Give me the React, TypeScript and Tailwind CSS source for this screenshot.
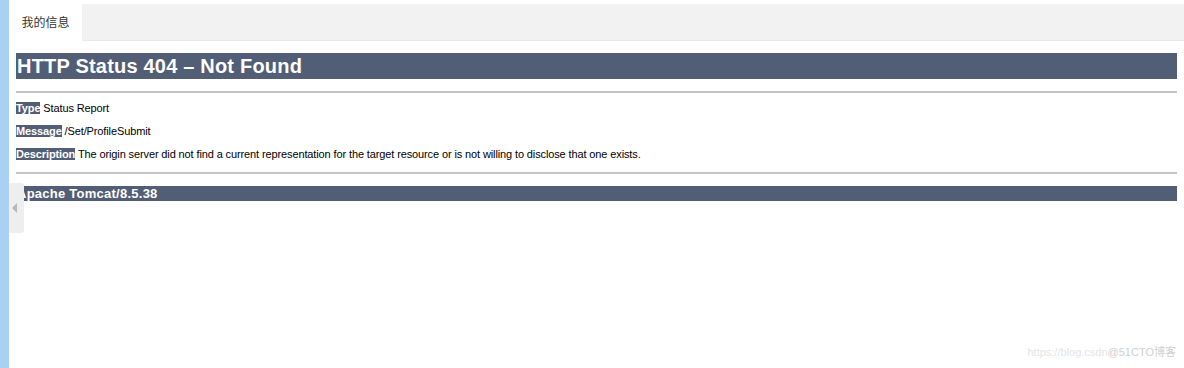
const body = { fontFamily: "'Liberation Sans', Arial, 'Noto Sans CJK SC', sans-serif" };

function Label({ children }: { children: string }) {
  return <b className="bg-[#525d76] text-white">{children}</b>;
}

export default function App() {
  return (
    <div className="relative flex h-[368px] w-[1184px] bg-white overflow-hidden" style={body}>
      {/* left accent strip */}
      <div className="w-[9px] shrink-0 bg-[#a9d1f3]" />

      <div className="flex-1 flex flex-col">
        {/* tabs */}
        <div className="mt-[4px] h-[37px] bg-[#f2f2f2] border-b border-[#e8e8e8] flex">
          <div className="w-[73px] h-[37px] bg-white flex items-center justify-center text-[12px] text-[#333]">
            我的信息
          </div>
        </div>

        {/* tomcat error page */}
        <div className="pl-[7px] pr-[7px] pt-[12px] text-[11px] text-black">
          <h1 className="bg-[#525d76] text-white font-bold text-[20px] leading-[26px] tracking-[0.2px] pl-[1px]">
            HTTP Status 404 – Not Found
          </h1>
          <hr className="mt-[12px] border-t-2 border-[#c4c4c4]" />
          <p className="mt-[8px] leading-[14px] tracking-[-0.12px]">
            <Label>Type</Label> Status Report
          </p>
          <p className="mt-[9px] leading-[14px] tracking-[-0.12px]">
            <Label>Message</Label> /Set/ProfileSubmit
          </p>
          <p className="mt-[9px] leading-[14px] tracking-[-0.12px]">
            <Label>Description</Label> The origin server did not find a current representation for the target resource or is not willing to disclose that one exists.
          </p>
          <hr className="mt-[11px] border-t-2 border-[#c4c4c4]" />
          <h3 className="mt-[12px] bg-[#525d76] text-white font-bold text-[13px] leading-[15px] tracking-[0.25px] pl-[1px]">
            Apache Tomcat/8.5.38
          </h3>
        </div>
      </div>

      {/* collapse handle */}
      <div className="absolute left-[9px] top-[183px] w-[15px] h-[50px] bg-[#eeeeee] rounded-r-[3px] flex items-center justify-center">
        <div className="w-0 h-0 border-y-[5px] border-y-transparent border-r-[5px] border-r-[#b8b8b8] -ml-[4px]" />
      </div>

      {/* watermark */}
      <div className="absolute right-[8px] bottom-[8px] text-[11px] text-[#e4e4e4]">
        https://blog.csdn<span className="text-[#d0d0d0]">@51CTO博客</span>
      </div>
    </div>
  );
}
